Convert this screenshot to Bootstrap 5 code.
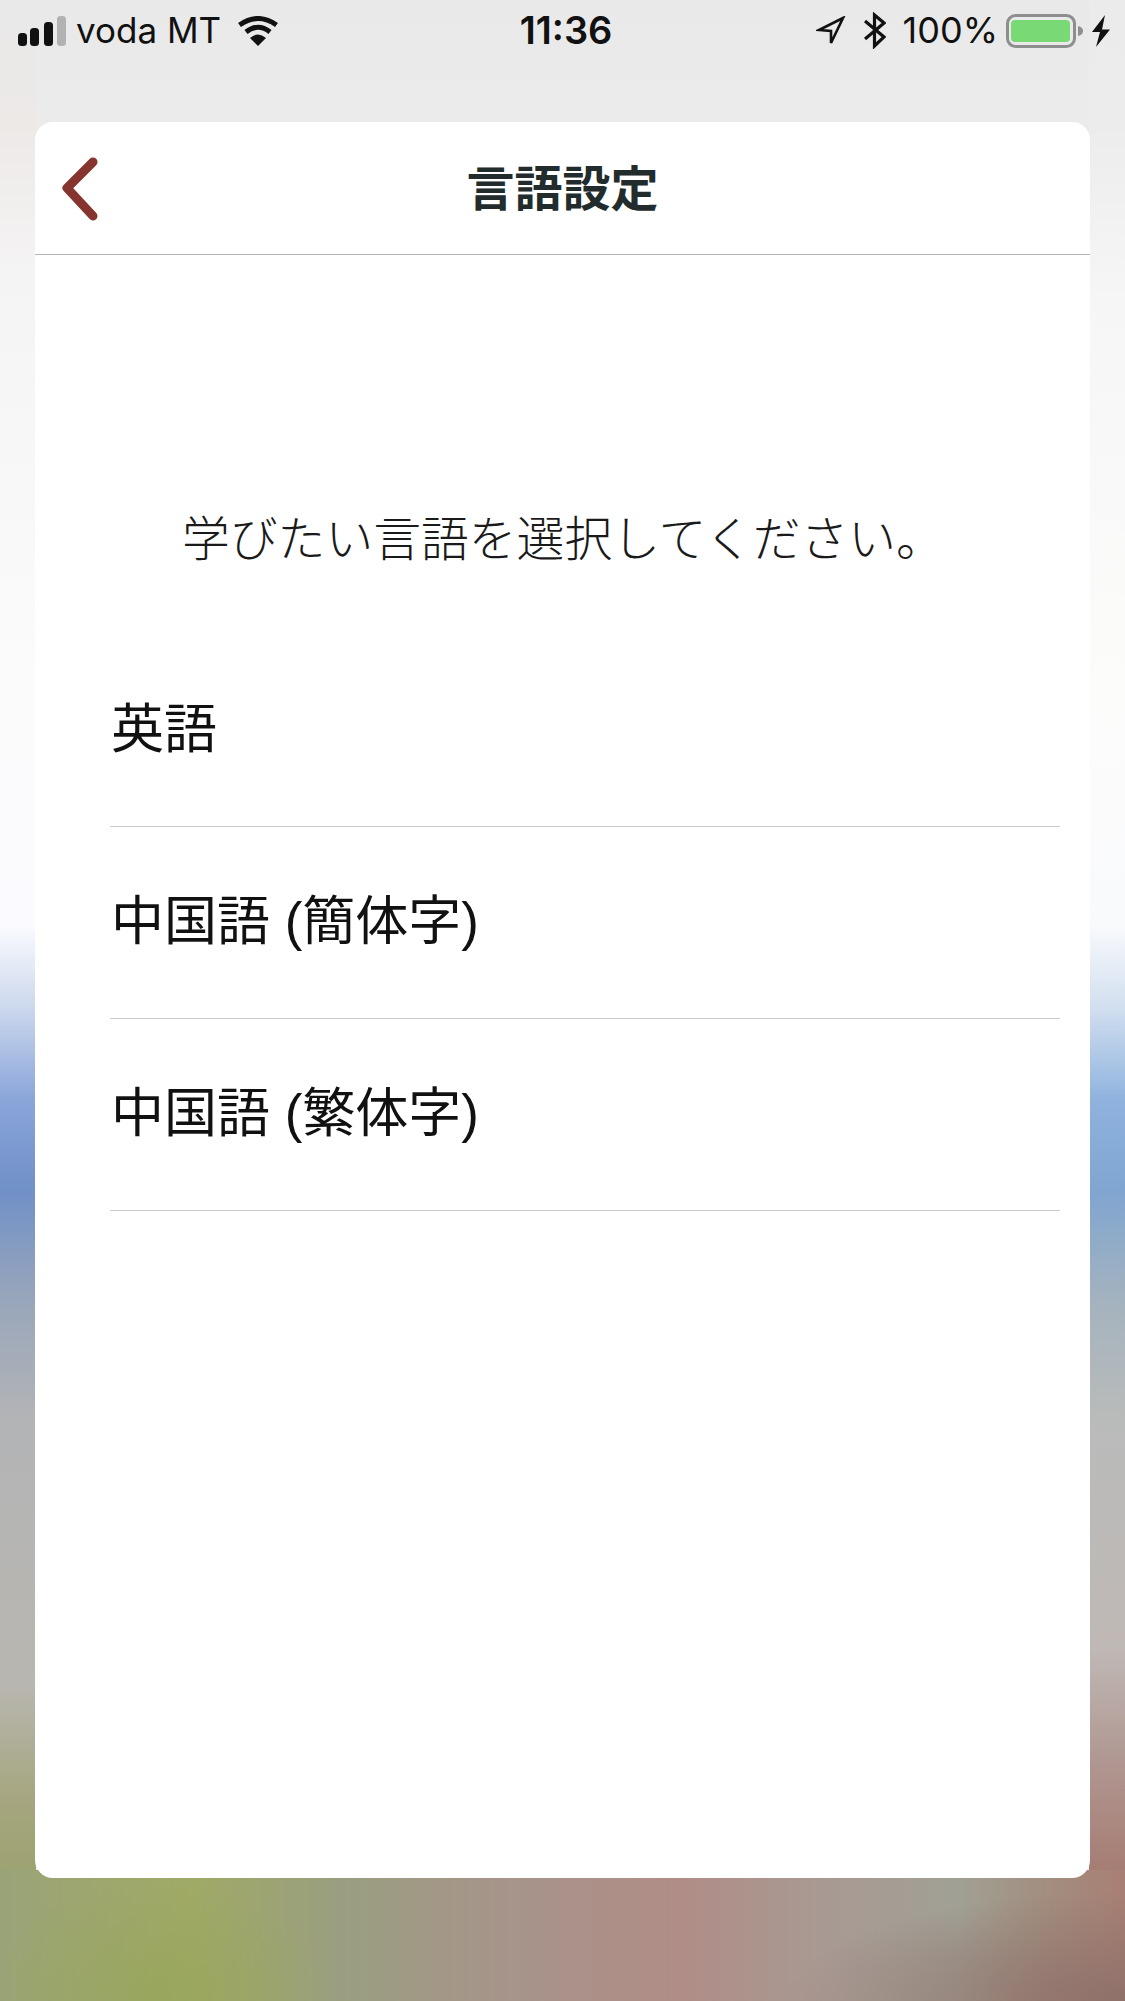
<!DOCTYPE html>
<html lang="ja">
<head>
    <meta charset="UTF-8">
    <meta name="viewport" content="width=device-width, initial-scale=1.0">
    <title>言語設定</title>
    <link href="https://cdn.jsdelivr.net/npm/bootstrap@5.3.0/dist/css/bootstrap.min.css" rel="stylesheet">
    <style>
        html, body { height: 2001px; }
        body {
            width: 1125px;
            overflow: hidden;
            font-family: "Noto Sans CJK JP", "Liberation Sans", sans-serif;
            color: #111;
            background-color: #ebebeb;
            background-image:
                radial-gradient(ellipse 340px 110px at 1125px 2001px, #8f716a 0%, rgba(143,113,106,0) 100%),
                radial-gradient(ellipse 170px 110px at 160px 1990px, rgba(150,165,88,.7) 0%, rgba(150,165,88,0) 100%),
                linear-gradient(to right, #9aa378 0, #a0aa66 190px, #9a9e80 340px, #a6948a 500px, #b08d87 680px, #a89a93 830px, #a1a094 960px, #a28f80 1040px, #a87f74 1125px),
                linear-gradient(to bottom, #e9e9e9 0, #ece9e7 122px, #f5f4f4 272px, #fbfbfb 675px, #fbfbff 925px, #cdd9ee 1005px, #8aa5da 1100px, #7090c8 1190px, #97a5bb 1295px, #b3b4b6 1420px, #b8b6b0 1685px, #a4a57c 1810px, #9ca270 1880px),
                linear-gradient(to bottom, #ebebeb 0, #ececec 122px, #f6f6f6 300px, #fcfcfb 700px, #f9fafc 925px, #d3e0f0 1005px, #8fb3de 1100px, #7fa5d0 1190px, #a5b3be 1305px, #b9bbba 1420px, #bfb8b5 1650px, #b09690 1765px, #a57a70 1880px),
                linear-gradient(to bottom, #e9e9e9 0, #ebebeb 122px);
            background-repeat: no-repeat;
            background-position: 0 0, 0 0, 0 1870px, 0 0, right 0 top 0, 0 0;
            background-size: 100% 100%, 100% 100%, 100% 131px, 36px 1880px, 36px 1880px, 100% 130px;
        }
        .status-row { height: 61px; padding: 0 15px 0 18px; font-family: Inter, "Liberation Sans", sans-serif; font-size: 35px; line-height: 61px; color: #111; }
        .status-side { flex: 1 1 0; }
        .status-time { font-weight: 600; font-size: 38px; }
        .status-row svg { display: block; }
        .signal-icon { margin-right: 10px; }
        .wifi-icon { margin-left: 15px; }
        .gps-icon { margin-right: 18px; }
        .bt-icon { margin-right: 17px; }
        .batt-pct { font-size: 36px; }
        .batt-icon { margin-left: 8px; }
        .bolt-icon { margin-left: 9px; }
        .lang-panel { height: 1756px; margin: 61px 35px 0; border-radius: 18px; }
        .panel-head { height: 133px; padding-bottom: 7px; border-bottom: 1px solid #b4b4b4; }
        .panel-title { font-size: 48px; font-weight: 700; color: #222c2c; margin: 0; line-height: 1; }
        .back-link { left: 20px; top: 32px; }
        .intro-text { font-size: 47.8px; font-weight: 300; line-height: 1; padding: 257px 0 0 147px; margin: 0 0 75px; color: #1a1a1a; }
        .lang-list { margin-left: 75px; margin-right: 30px; font-family: "Liberation Sans", "Noto Sans CJK JP", sans-serif; }
        .lang-list .lang-item.list-group-item,
        .lang-list .lang-item.list-group-item:last-child { height: 192px; padding: 0 0 1px 1px; font-size: 53px; font-weight: 400; border: 0; border-bottom: 1px solid #cbcbcb; border-radius: 0; color: #111; }
    </style>
</head>
<body>
    <!-- status bar -->
    <div class="status-row d-flex align-items-center">
        <div class="status-side d-flex align-items-center">
            <svg class="signal-icon" width="48" height="30" viewBox="0 0 48 30"><rect x="0" y="17" width="9" height="13" rx="3.5" fill="#111"/><rect x="12" y="12" width="9" height="18" rx="3.5" fill="#111"/><rect x="26" y="6" width="9" height="24" rx="3.5" fill="#111"/><rect x="39" y="0" width="9" height="30" rx="3.5" fill="#b2b2b2"/></svg>
            <span>voda MT</span>
            <svg class="wifi-icon" width="44" height="30" viewBox="0 0 42 30"><path d="M21 30 L13 22 Q21 15 29 22 Z" fill="#111"/><path d="M9 16 Q21 6.5 33 16" fill="none" stroke="#111" stroke-width="5"/><path d="M2.5 9 Q21 -4 39.5 9" fill="none" stroke="#111" stroke-width="5"/></svg>
        </div>
        <div class="status-time ms-1">11:36</div>
        <div class="status-side d-flex align-items-center justify-content-end">
            <svg class="gps-icon" width="30" height="30" viewBox="0 0 30 30"><path d="M27 2 L3 14 L15 15 L15 27 Z" fill="none" stroke="#111" stroke-width="2.6"/></svg>
            <svg class="bt-icon" width="22" height="37" viewBox="0 0 22 37"><path d="M1 9 L20 25 L10.5 34 V3 L20 11 L1 27" fill="none" stroke="#111" stroke-width="3.2"/></svg>
            <span class="batt-pct">100%</span>
            <svg class="batt-icon" width="77" height="34" viewBox="0 0 77 34"><rect x="1.5" y="1.5" width="67" height="31" rx="8" fill="none" stroke="#8e8e8e" stroke-width="3"/><rect x="5" y="6" width="59" height="22" rx="4" fill="#78d975"/><path d="M72 12 Q77 13 77 17 Q77 21 72 22 Z" fill="#8e8e8e"/></svg>
            <svg class="bolt-icon" width="18" height="32" viewBox="0 0 18 32"><path d="M13 0 L0 17 H8 L4 32 L18 14.5 H10 Z" fill="#111"/></svg>
        </div>
    </div>

    <div class="lang-panel card border-0 overflow-hidden">
        <div class="panel-head position-relative d-flex align-items-center justify-content-center">
            <a class="back-link position-absolute d-block" href="#" aria-label="戻る">
                <svg width="44" height="70" viewBox="0 0 44 70" class="d-block"><path d="M38 8 L12 34 L38 62" fill="none" stroke="#85352d" stroke-width="9" stroke-linecap="round" stroke-linejoin="round"/></svg>
            </a>
            <h1 class="panel-title">言語設定</h1>
        </div>
        <p class="intro-text">学びたい言語を選択してください。</p>
        <div class="lang-list list-group list-group-flush">
            <a href="#" class="lang-item list-group-item d-flex align-items-center">英語</a>
            <a href="#" class="lang-item list-group-item d-flex align-items-center">中国語 (簡体字)</a>
            <a href="#" class="lang-item list-group-item d-flex align-items-center">中国語 (繁体字)</a>
        </div>
    </div>
</body>
</html>
